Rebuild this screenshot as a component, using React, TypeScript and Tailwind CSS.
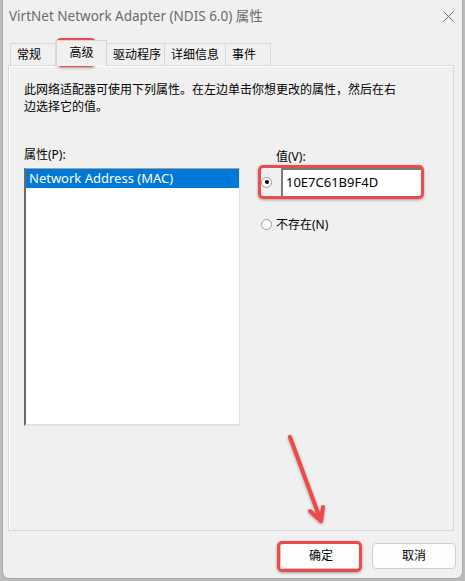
import React from "react";

const tabs = [
  { label: "常规", w: "w-[46px]" },
  { label: "高级", w: "w-[51px]", active: true },
  { label: "驱动程序", w: "w-[58px]" },
  { label: "详细信息", w: "w-[61px]" },
  { label: "事件", w: "w-[45px]" },
];

function Radio({ checked }: { checked?: boolean }) {
  return (
    <span className="flex h-[11px] w-[11px] items-center justify-center rounded-full border border-[#9a9a9a] bg-white">
      {checked && <span className="h-[4px] w-[4px] rounded-full bg-black" />}
    </span>
  );
}

export default function App() {
  return (
    <div className="relative h-[581px] w-[465px] overflow-hidden bg-[#bcbcbc] pb-[2px] pl-[2px] pr-[2px] font-['Noto_Sans','Noto_Sans_CJK_SC',sans-serif] text-[12px] text-black">
      <div className="flex h-full flex-col rounded-b-[7px] border border-t-0 border-[#a8a8a8] bg-[#f0f0f0]">
        {/* title bar */}
        <div className="flex h-[37px] items-start justify-between pl-[6px] pr-[8px] pt-[7px]">
          <span className="text-[13.5px] leading-[18px] text-[#6b6b6b]">
            VirtNet Network Adapter (NDIS 6.0) 属性
          </span>
          <svg width="11" height="11" viewBox="0 0 11 11" className="mt-[4px]">
            <path d="M0.5 0.5L10.5 10.5M10.5 0.5L0.5 10.5" stroke="#6b6b6b" strokeWidth="1" />
          </svg>
        </div>

        {/* tabs */}
        <div className="relative z-10 flex h-[28px] items-end pl-[7px]">
          {tabs.map((t, i) =>
            t.active ? (
              <div
                key={t.label}
                className={`${t.w} -mb-px flex h-[26px] items-start justify-center border border-b-0 border-[#d6d6d6] bg-[#f0f0f0] pt-[3px] leading-[17px]`}
              >
                {t.label}
              </div>
            ) : (
              <div
                key={t.label}
                className={`${t.w} flex h-[22px] items-center border-t border-r border-[#d9d9d9] bg-[#f0f0f0] pl-[6px] leading-[17px] ${i === 0 ? "border-l" : ""}`}
              >
                {t.label}
              </div>
            )
          )}
        </div>

        {/* tab page */}
        <div className="ml-[5px] mr-[8px] flex h-[466px] flex-col border border-[#d9d9d9] bg-[#f0f0f0] pl-[15px] pt-[15px] shadow-[inset_1px_1px_0_#ffffff]">
          <p className="leading-[17px]">
            此网络适配器可使用下列属性。在左边单击你想更改的属性，然后在右
            <br />
            边选择它的值。
          </p>

          <div className="mt-[31px] flex">
            <div className="flex w-[216px] flex-col">
              <span className="leading-[17px]">属性(P):</span>
              <div className="mt-[5px] h-[258px] border-t border-l-2 border-r border-b-2 border-t-[#a0a0a0] border-l-[#6a6a6a] border-r-[#e3e3e3] border-b-[#e3e3e3] bg-white">
                <div className="flex h-[19px] items-center bg-[#0078d7] pl-[3px] text-[13px] text-white">
                  Network Address (MAC)
                </div>
              </div>
            </div>

            <div className="ml-[18px] flex flex-col">
              <span className="pl-[18px] pt-[2px] leading-[17px]">值(V):</span>
              <div className="mt-[3px] flex items-center">
                <span className="ml-[3px]">
                  <Radio checked />
                </span>
                <div className="ml-[9px] flex h-[28px] w-[141px] items-center border-t-2 border-l-2 border-t-[#7a7a7a] border-l-[#7a7a7a] bg-white pl-[3px] text-[13px]">
                  10E7C61B9F4D
                </div>
              </div>
              <div className="mt-[20px] flex items-center">
                <span className="ml-[3px]">
                  <Radio />
                </span>
                <span className="ml-[4px] leading-[17px]">不存在(N)</span>
              </div>
            </div>
          </div>
        </div>

        {/* buttons */}
        <div className="mt-[12px] flex justify-end gap-[10px] pr-[6px]">
          <button className="flex h-[26px] w-[82px] items-center justify-center rounded-[4px] border border-[#c8c8c8] bg-[#fdfdfd] text-[12px]">
            确定
          </button>
          <button className="flex h-[26px] w-[84px] items-center justify-center rounded-[4px] border border-[#d0d0d0] bg-[#fdfdfd] text-[12px]">
            取消
          </button>
        </div>
      </div>

      {/* annotations */}
      <div className="pointer-events-none absolute left-[56px] top-[38px] h-[29px] w-[40px] rounded-[5px] border-[3px] border-[#ef4a4a] shadow-[0_1px_3px_rgba(0,0,0,0.35)]" />
      <div className="pointer-events-none absolute left-[258px] top-[165px] h-[34px] w-[166px] rounded-[5px] border-[3px] border-[#ef4a4a] shadow-[0_1px_3px_rgba(0,0,0,0.35)]" />
      <div className="pointer-events-none absolute left-[277px] top-[541px] h-[31px] w-[85px] rounded-[5px] border-[3px] border-[#ef4a4a] shadow-[0_1px_3px_rgba(0,0,0,0.35)]" />
      <svg className="pointer-events-none absolute left-0 top-0" width="465" height="581">
        <g stroke="#ef4a4a" strokeWidth="4" strokeLinecap="round" fill="none" style={{ filter: "drop-shadow(0 1px 1.5px rgba(0,0,0,0.35))" }}>
          <path d="M290 437L321 521" />
          <path d="M310 511L321 521L323 507" strokeLinejoin="round" />
        </g>
      </svg>
    </div>
  );
}
